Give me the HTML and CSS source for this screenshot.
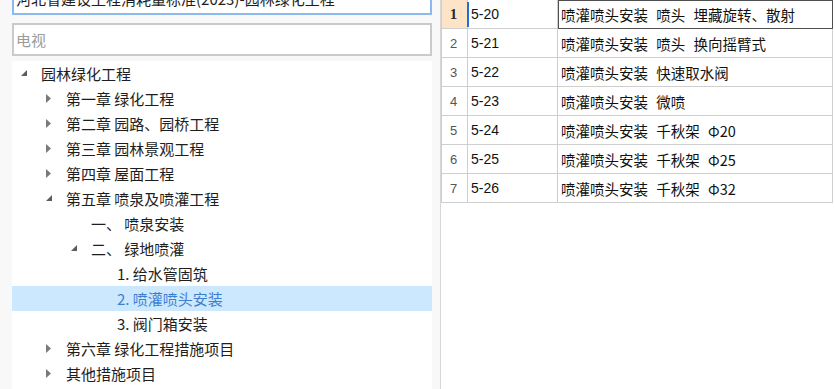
FILE: index.html
```html
<!DOCTYPE html>
<html lang="zh-CN">
<head>
<meta charset="utf-8">
<title>定额库</title>
<link rel="stylesheet" href="styles.css">
</head>
<body>
<div class="app">
  <div class="left">
    <div class="field field-focus">河北省建设工程消耗量标准(2023)-园林绿化工程</div>
    <div class="field field-search"><span class="placeholder">电视</span></div>
    <div class="tree">
      <div class="node lvl0"><span class="arrow"><svg width="7" height="7" viewBox="0 0 7 7"><polygon points="6,0 6,6 0,6" fill="#5c5c5c"/></svg></span><span class="label">园林绿化工程</span></div>
      <div class="node lvl1"><span class="arrow"><svg width="6" height="9" viewBox="0 0 6 9"><polygon points="0,0 5,4.5 0,9" fill="#7a7a7a"/></svg></span><span class="label">第一章 绿化工程</span></div>
      <div class="node lvl1"><span class="arrow"><svg width="6" height="9" viewBox="0 0 6 9"><polygon points="0,0 5,4.5 0,9" fill="#7a7a7a"/></svg></span><span class="label">第二章 园路、园桥工程</span></div>
      <div class="node lvl1"><span class="arrow"><svg width="6" height="9" viewBox="0 0 6 9"><polygon points="0,0 5,4.5 0,9" fill="#7a7a7a"/></svg></span><span class="label">第三章 园林景观工程</span></div>
      <div class="node lvl1"><span class="arrow"><svg width="6" height="9" viewBox="0 0 6 9"><polygon points="0,0 5,4.5 0,9" fill="#7a7a7a"/></svg></span><span class="label">第四章 屋面工程</span></div>
      <div class="node lvl1"><span class="arrow"><svg width="7" height="7" viewBox="0 0 7 7"><polygon points="6,0 6,6 0,6" fill="#5c5c5c"/></svg></span><span class="label">第五章 喷泉及喷灌工程</span></div>
      <div class="node lvl2"><span class="arrow"></span><span class="label">一、 喷泉安装</span></div>
      <div class="node lvl2"><span class="arrow"><svg width="7" height="7" viewBox="0 0 7 7"><polygon points="6,0 6,6 0,6" fill="#5c5c5c"/></svg></span><span class="label">二、 绿地喷灌</span></div>
      <div class="node lvl3"><span class="arrow"></span><span class="label">1. 给水管固筑</span></div>
      <div class="node lvl3 selected"><span class="arrow"></span><span class="label">2. 喷灌喷头安装</span></div>
      <div class="node lvl3"><span class="arrow"></span><span class="label">3. 阀门箱安装</span></div>
      <div class="node lvl1"><span class="arrow"><svg width="6" height="9" viewBox="0 0 6 9"><polygon points="0,0 5,4.5 0,9" fill="#7a7a7a"/></svg></span><span class="label">第六章 绿化工程措施项目</span></div>
      <div class="node lvl1"><span class="arrow"><svg width="6" height="9" viewBox="0 0 6 9"><polygon points="0,0 5,4.5 0,9" fill="#7a7a7a"/></svg></span><span class="label">其他措施项目</span></div>
    </div>
  </div>
  <div class="right">
    <table class="grid">
      <tr class="row current">
        <td class="rh">1</td><td class="code"><span class="marker"></span>5-20</td><td class="name active">喷灌喷头安装 喷头 埋藏旋转、散射</td>
      </tr>
      <tr class="row">
        <td class="rh">2</td><td class="code">5-21</td><td class="name">喷灌喷头安装 喷头 换向摇臂式</td>
      </tr>
      <tr class="row">
        <td class="rh">3</td><td class="code">5-22</td><td class="name">喷灌喷头安装 快速取水阀</td>
      </tr>
      <tr class="row">
        <td class="rh">4</td><td class="code">5-23</td><td class="name">喷灌喷头安装 微喷</td>
      </tr>
      <tr class="row">
        <td class="rh">5</td><td class="code">5-24</td><td class="name">喷灌喷头安装 千秋架 Φ20</td>
      </tr>
      <tr class="row">
        <td class="rh">6</td><td class="code">5-25</td><td class="name">喷灌喷头安装 千秋架 Φ25</td>
      </tr>
      <tr class="row">
        <td class="rh">7</td><td class="code">5-26</td><td class="name">喷灌喷头安装 千秋架 Φ32</td>
      </tr>
    </table>
  </div>
</div>
</body>
</html>
```

FILE: styles.css
```css
html, body {
  margin: 0;
  padding: 0;
  background: #ffffff;
  overflow: hidden;
}

.app {
  display: flex;
  width: 835px;
  height: 389px;
  font-family: "Noto Sans CJK SC", "Noto Sans", sans-serif;
  color: #1e1e1e;
}

.left {
  width: 420px;
  flex: none;
  padding: 0 8px 0 12px;
  background: #f8f8f8;
  display: flex;
  flex-direction: column;
}

.field {
  box-sizing: border-box;
  height: 33px;
  background: #ffffff;
  font-size: 15px;
  line-height: 29px;
  padding: 0 2px;
  white-space: nowrap;
  overflow: hidden;
}

.field-focus {
  margin-top: -18px;
  border: 2px solid #8cbaf0;
}

.field-search {
  margin-top: 8px;
  border: 2px solid #cacaca;
}

.placeholder {
  color: #9b9b9b;
}

.tree {
  margin-top: 5px;
  flex: 1;
  background: #ffffff;
}

.node {
  display: flex;
  align-items: center;
  height: 25px;
  font-size: 15px;
  white-space: pre;
}

.lvl0 { padding-left: 8px; }
.lvl1 { padding-left: 33px; }
.lvl2 { padding-left: 58px; }
.lvl3 { padding-left: 84px; }

.arrow {
  width: 21px;
  flex: none;
  display: flex;
  align-items: center;
  padding-left: 1px;
  box-sizing: border-box;
}

.arrow svg {
  display: block;
}

.selected {
  background: #cce8ff;
  color: #3c7fd0;
}

.right {
  flex: 1;
  border-left: 1px solid #d6d6d6;
  background: #ffffff;
}

.grid {
  border-collapse: collapse;
  border-left: 1px solid #c6c6c6;
  font-size: 14.5px;
}

.grid td {
  height: 28px;
  padding: 0;
  border: 1px solid #cfcfcf;
  border-top: none;
  white-space: nowrap;
  vertical-align: middle;
}

.rh {
  width: 23px;
  text-align: center;
  font-family: "Liberation Sans", "DejaVu Sans", sans-serif;
  font-size: 13px;
  color: #555555;
  padding-right: 2px !important;
}

.current .rh {
  background: #fde4c6;
  font-family: "Liberation Serif", serif;
  font-weight: bold;
  font-size: 15px;
  color: #2a2a2a;
}

.code {
  width: 86px;
  position: relative;
  font-family: "Liberation Sans", "DejaVu Sans", sans-serif;
  font-size: 14px;
  color: #111111;
  padding-left: 3px !important;
}

.marker {
  position: absolute;
  left: -1px;
  top: 2px;
  bottom: 1px;
  width: 2px;
  background: #1f6fe0;
}

.name {
  width: 271px;
  color: #111111;
  padding-left: 3px !important;
  word-spacing: 5px;
}

.active {
  outline: 1px solid #505050;
  outline-offset: -1px;
}
```
